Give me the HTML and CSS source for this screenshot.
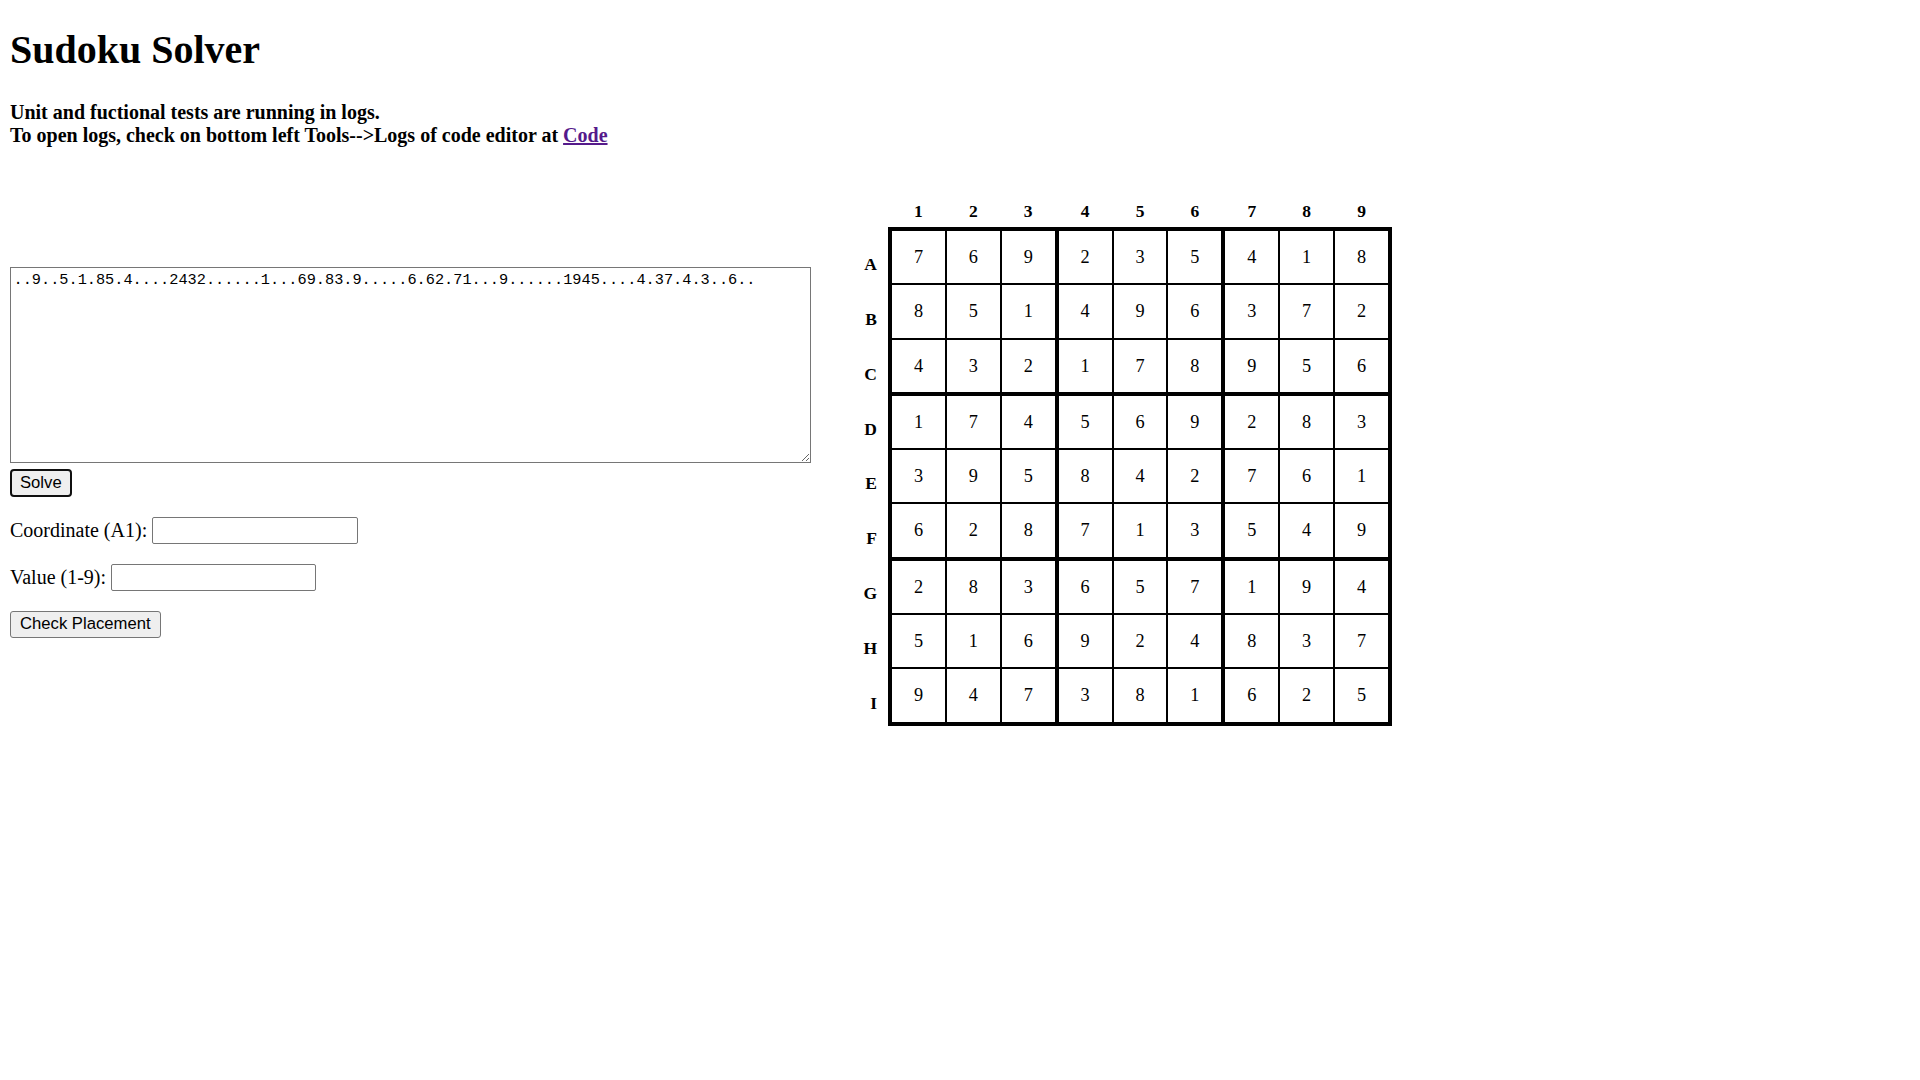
FILE: index.html
```html
<!DOCTYPE html>
<html lang="en">
<head>
<meta charset="utf-8">
<title>Sudoku Solver</title>
<link rel="stylesheet" href="styles.css">
</head>
<body class="page">
  <header class="page-header">
    <h1 class="title">Sudoku Solver</h1>
  </header>
  <div class="tests">
    <h4 class="tests-note">Unit and fuctional tests are running in logs.<br>To open logs, check on bottom left Tools--&gt;Logs of code editor at <a class="code-link" href="#">Code</a></h4>
  </div>
  <div class="container">
    <div class="form-container">
      <form class="solve-form">
        <textarea class="puzzle-input" spellcheck="false">..9..5.1.85.4....2432......1...69.83.9.....6.62.71...9......1945....4.37.4.3..6..</textarea>
        <button type="button" class="btn btn-solve">Solve</button>
      </form>
      <form class="check-form">
        <p class="checker"><span class="checker-label">Coordinate (A1):</span><input type="text" class="checker-input"></p>
        <p class="checker"><span class="checker-label">Value (1-9):</span><input type="text" class="checker-input"></p>
        <button type="button" class="btn">Check Placement</button>
      </form>
    </div>
    <div class="board">
      <div class="row-labels">
        <div class="row-label">A</div>
        <div class="row-label">B</div>
        <div class="row-label">C</div>
        <div class="row-label">D</div>
        <div class="row-label">E</div>
        <div class="row-label">F</div>
        <div class="row-label">G</div>
        <div class="row-label">H</div>
        <div class="row-label">I</div>
      </div>
      <div class="board-main">
        <div class="col-head">
          <div class="col-group"><div class="col-num">1</div><div class="col-num">2</div><div class="col-num">3</div></div>
          <div class="col-group"><div class="col-num">4</div><div class="col-num">5</div><div class="col-num">6</div></div>
          <div class="col-group"><div class="col-num">7</div><div class="col-num">8</div><div class="col-num">9</div></div>
        </div>
        <div class="grid">
          <div class="box"><div class="cell">7</div><div class="cell">6</div><div class="cell">9</div><div class="cell">8</div><div class="cell">5</div><div class="cell">1</div><div class="cell">4</div><div class="cell">3</div><div class="cell">2</div></div>
          <div class="box"><div class="cell">2</div><div class="cell">3</div><div class="cell">5</div><div class="cell">4</div><div class="cell">9</div><div class="cell">6</div><div class="cell">1</div><div class="cell">7</div><div class="cell">8</div></div>
          <div class="box"><div class="cell">4</div><div class="cell">1</div><div class="cell">8</div><div class="cell">3</div><div class="cell">7</div><div class="cell">2</div><div class="cell">9</div><div class="cell">5</div><div class="cell">6</div></div>
          <div class="box"><div class="cell">1</div><div class="cell">7</div><div class="cell">4</div><div class="cell">3</div><div class="cell">9</div><div class="cell">5</div><div class="cell">6</div><div class="cell">2</div><div class="cell">8</div></div>
          <div class="box"><div class="cell">5</div><div class="cell">6</div><div class="cell">9</div><div class="cell">8</div><div class="cell">4</div><div class="cell">2</div><div class="cell">7</div><div class="cell">1</div><div class="cell">3</div></div>
          <div class="box"><div class="cell">2</div><div class="cell">8</div><div class="cell">3</div><div class="cell">7</div><div class="cell">6</div><div class="cell">1</div><div class="cell">5</div><div class="cell">4</div><div class="cell">9</div></div>
          <div class="box"><div class="cell">2</div><div class="cell">8</div><div class="cell">3</div><div class="cell">5</div><div class="cell">1</div><div class="cell">6</div><div class="cell">9</div><div class="cell">4</div><div class="cell">7</div></div>
          <div class="box"><div class="cell">6</div><div class="cell">5</div><div class="cell">7</div><div class="cell">9</div><div class="cell">2</div><div class="cell">4</div><div class="cell">3</div><div class="cell">8</div><div class="cell">1</div></div>
          <div class="box"><div class="cell">1</div><div class="cell">9</div><div class="cell">4</div><div class="cell">8</div><div class="cell">3</div><div class="cell">7</div><div class="cell">6</div><div class="cell">2</div><div class="cell">5</div></div>
        </div>
      </div>
    </div>
  </div>
</body>
</html>
```

FILE: styles.css
```css
html {
  background: #ffffff;
}

.page {
  margin: 0;
  padding: 0 10px;
  font-family: "Liberation Serif", "Times New Roman", serif;
  color: #000000;
}

.title {
  margin: 26.8px 0 0;
  font-size: 40px;
  line-height: 46px;
  font-weight: bold;
}

.tests-note {
  margin: 28px 0 0;
  font-size: 20px;
  line-height: 23px;
  font-weight: bold;
}

.code-link {
  color: #551a8b;
  text-decoration: underline;
}

.container {
  display: flex;
  align-items: flex-start;
  gap: 38px;
  margin-top: 53.2px;
}

.form-container {
  width: 801px;
  margin-top: 67.3px;
  display: flex;
  flex-direction: column;
  gap: 20.3px;
}

.solve-form {
  margin: 0;
  display: flex;
  flex-direction: column;
  align-items: flex-start;
  gap: 5.5px;
}

.puzzle-input {
  box-sizing: border-box;
  width: 801px;
  height: 196.2px;
  margin: 0;
  padding: 2.5px;
  border: 1px solid #767676;
  border-radius: 0;
  font-family: "Liberation Mono", "DejaVu Sans Mono", monospace;
  font-size: 15.27px;
  color: #000000;
  background: #ffffff;
}

.check-form {
  margin: 0;
  display: flex;
  flex-direction: column;
  align-items: flex-start;
  gap: 20.5px;
}

.checker {
  margin: 0;
  height: 26.4px;
  display: flex;
  align-items: center;
  gap: 5px;
  font-size: 20px;
  line-height: 23px;
}

.checker-input {
  box-sizing: border-box;
  width: 205.4px;
  height: 26.4px;
  margin: 0;
  padding: 1px 2px;
  border: 1px solid #767676;
  border-radius: 2px;
  background: #ffffff;
}

.btn {
  box-sizing: border-box;
  height: 26.7px;
  margin: 0;
  padding: 0 9px;
  border: 1px solid #767676;
  border-radius: 3px;
  background: #efefef;
  color: #000000;
  font-family: "Liberation Sans", Arial, sans-serif;
  font-size: 16.67px;
  line-height: 1;
}

.btn-solve {
  height: 28px;
  padding: 0 8px;
  border: 2px solid #101010;
  border-radius: 4px;
}

.board {
  display: flex;
  align-items: flex-start;
}

.row-labels {
  width: 28px;
  margin-right: 11px;
  padding-top: 37.1px;
  display: flex;
  flex-direction: column;
}

.row-label {
  height: 54.85px;
  line-height: 54.85px;
  text-align: right;
  font-weight: bold;
  font-size: 17.5px;
}

.board-main {
  display: flex;
  flex-direction: column;
  gap: 5px;
}

.col-head {
  display: flex;
  gap: 4px;
  padding: 0 4px;
  height: 22px;
}

.col-group {
  display: flex;
  gap: 2px;
}

.col-num {
  width: 52.9px;
  height: 22px;
  line-height: 22px;
  text-align: center;
  font-weight: bold;
  font-size: 17.5px;
}

.grid {
  display: grid;
  grid-template-columns: repeat(3, auto);
  gap: 4px;
  padding: 4px;
  background: #000000;
  width: max-content;
}

.box {
  display: grid;
  grid-template-columns: repeat(3, 52.9px);
  grid-auto-rows: 52.3px;
  gap: 2px;
}

.cell {
  background: #ffffff;
  text-align: center;
  line-height: 52.3px;
  font-size: 18.3px;
}
```
